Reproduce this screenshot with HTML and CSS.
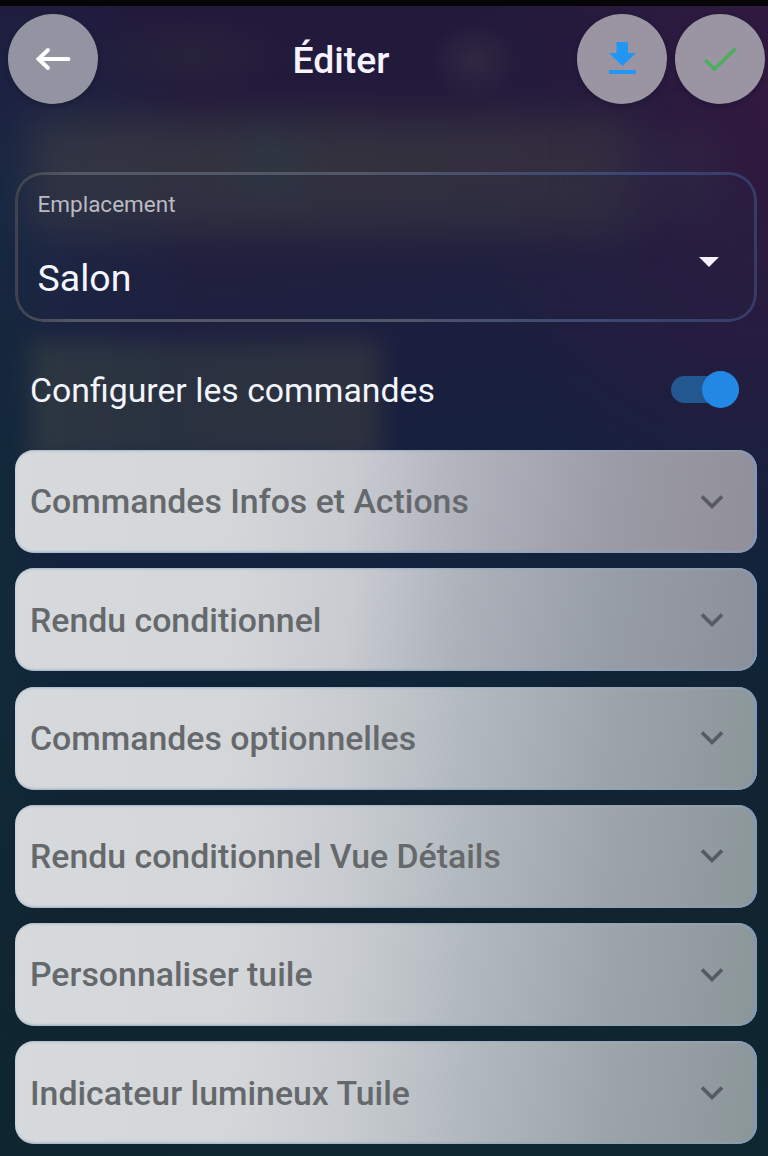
FILE: index.html
```html
<!DOCTYPE html>
<html lang="fr">
<head>
<meta charset="utf-8">
<title>Éditer</title>
<link rel="stylesheet" href="styles.css">
</head>
<body>
<div class="screen">
  <div class="glow glow-band"></div>
  <div class="glow glow-right"></div>
  <div class="glow glow-row"></div>
  <header class="topbar">
    <button class="round" aria-label="Retour"><svg width="90" height="90" viewBox="0 0 90 90"><path d="M60.500 45H31M40 36L30.500 45L40 54" fill="none" stroke="#fff" stroke-width="3.900" stroke-linecap="round"/></svg></button>
    <h1 class="title">Éditer</h1>
    <button class="round" aria-label="Télécharger"><svg width="90" height="90" viewBox="0 0 90 90"><path d="M39.500 28H51V39H59L45.300 52L32 39H39.500ZM32 56H59V60H32Z" fill="#2196f3"/></svg></button>
    <button class="round" aria-label="Valider"><svg width="90" height="90" viewBox="0 0 90 90"><path d="M30 46L39.500 55L60.500 34.500" fill="none" stroke="#4caf60" stroke-width="3.700"/></svg></button>
  </header>
  <main class="content">
    <div class="select">
      <div><div class="label">Emplacement</div><div class="value">Salon</div></div>
      <svg class="caret" width="20" height="10" viewBox="0 0 20 10"><path d="M0 0H20L10 10Z" fill="#f5f3ff"/></svg>
    </div>
    <div class="setting"><span class="setting-label">Configurer les commandes</span><span class="switch"><span class="thumb"></span></span></div>
    <div class="list">
      <section class="card violet"><span class="card-title">Commandes Infos et Actions</span><svg class="chevron" width="24" height="16" viewBox="0 0 24 16"><path d="M2 2.500L12 12.500L22 2.500"/></svg></section>
      <section class="card slate"><span class="card-title">Rendu conditionnel</span><svg class="chevron" width="24" height="16" viewBox="0 0 24 16"><path d="M2 2.500L12 12.500L22 2.500"/></svg></section>
      <section class="card"><span class="card-title">Commandes optionnelles</span><svg class="chevron" width="24" height="16" viewBox="0 0 24 16"><path d="M2 2.500L12 12.500L22 2.500"/></svg></section>
      <section class="card"><span class="card-title">Rendu conditionnel Vue Détails</span><svg class="chevron" width="24" height="16" viewBox="0 0 24 16"><path d="M2 2.500L12 12.500L22 2.500"/></svg></section>
      <section class="card"><span class="card-title">Personnaliser tuile</span><svg class="chevron" width="24" height="16" viewBox="0 0 24 16"><path d="M2 2.500L12 12.500L22 2.500"/></svg></section>
      <section class="card"><span class="card-title">Indicateur lumineux Tuile</span><svg class="chevron" width="24" height="16" viewBox="0 0 24 16"><path d="M2 2.500L12 12.500L22 2.500"/></svg></section>
    </div>
  </main>
</div>
</body>
</html>
```
FILE: styles.css
```css
* { box-sizing: border-box; }
body { margin: 0; font-family: Roboto, "Liberation Sans", sans-serif; }
.screen {
  position: relative;
  isolation: isolate;
  width: 768px;
  height: 1156px;
  overflow: hidden;
  border-top: 6px solid #060609;
  background:
    radial-gradient(ellipse 45px 40px at 475px 55px, #343044b0, transparent),
    radial-gradient(ellipse 100px 45px at 190px 50px, #2d2b3c80, transparent),
    radial-gradient(ellipse 300px 480px at 100% 8%, #32193f, #291b3fbb 50%, transparent),
    radial-gradient(ellipse 70px 500px at 0 50%, #112a38, transparent),
    radial-gradient(ellipse 200px 300px at 0 18%, #182745, transparent),
    linear-gradient(174deg, #22193b 0%, #221b3c 17%, #1b1f3f 32%, #14223f 45%, #102439 55%, #10242f 75%, #0e2731 100%);
}
.glow { position: absolute; z-index: -1; filter: blur(20px); }
.glow-band {
  left: 30px; top: 112px; width: 600px; height: 115px;
  background: radial-gradient(ellipse 40px 50px at 240px 45px, #2a3f48, transparent), linear-gradient(90deg, #343844, #36353f 40%, #35303f);
  opacity: .9;
}
.glow-right { left: 595px; top: 125px; width: 125px; height: 90px; background: #32294380; }
.glow-row {
  left: 30px; top: 335px; width: 350px; height: 120px; filter: blur(12px);
  background: linear-gradient(90deg, #2f3a41, #2b3441 40%, #32343f); opacity: .9;
}
.topbar { display: flex; align-items: center; padding: 8px 3.500px 0 7.500px; gap: 8px; }
.round {
  width: 90px; height: 90px; flex: none; padding: 0; border: 0; border-radius: 50%;
  background: #9a94a3; box-shadow: 0 2px 5px #0b102055;
}
.round:first-child { background: #9394a2; }
.round svg { display: block; }
.title { flex: 1; margin: 0; padding: 1px 0 0 187px; font-size: 37.300px; line-height: 44px; font-weight: 500; color: #f6f2ff; }
.content { padding: 68px 11px 0 15px; }
.select {
  position: relative; height: 150px; display: flex; justify-content: space-between; align-items: center;
  padding: 0 38px 0 22.500px; border-radius: 28px; background: #26284430;
}
.select::before {
  content: ""; position: absolute; inset: 0; padding: 3px; border-radius: inherit;
  background: linear-gradient(90deg, #414251 0%, #545864 8%, #50566a 50%, #394575 85%, #383b69 100%);
  mask: linear-gradient(#000 0 0) content-box exclude, linear-gradient(#000 0 0);
}
.label { margin-top: -5px; font-size: 22.500px; line-height: 28px; color: #babac4; }
.value { margin-top: 38px; font-size: 37.500px; line-height: 44px; color: #f4f5ff; }
.caret { margin-top: 30px; }
.setting { height: 128px; padding: 7px 18px 0 15px; display: flex; align-items: center; justify-content: space-between; }
.setting-label { padding-top: 2px; font-size: 33.800px; line-height: 42px; color: #f2f5fc; }
.switch { width: 68px; height: 27px; display: flex; align-items: center; justify-content: flex-end; background: #235790; border-radius: 14px; }
.thumb { flex: none; width: 37px; height: 37px; border-radius: 50%; background: #2388e4; }
.list { display: flex; flex-direction: column; gap: 15.300px; }
.card {
  --mid: #b3babf; --dark: #9ca4aa; --end: #8b9699;
  height: 103px; flex: none; display: flex; align-items: center; justify-content: space-between;
  padding: 0 33px 0 15px; border-radius: 19px;
  background: linear-gradient(98deg, #d6dadc 0%, #d3d7d9 30%, #c8ccd1 45%, var(--mid) 60%, var(--dark) 80%, var(--end) 100%);
  box-shadow: inset -2px 0 2px #7f98bd, inset 0 -2px 2px #91a7c460, inset 0 2px 2px #a9b4cc50;
}
.violet { --mid: #b0b2bc; --dark: #9a9ba6; --end: #918f99; }
.slate { --mid: #acb1ba; --dark: #979da6; --end: #8b8f99; }
.card-title { padding-top: 1.500px; font-size: 33.850px; line-height: 42px; font-weight: 500; color: #66696c; }
.chevron { fill: none; stroke: #565a62; stroke-width: 3.700; }
```
